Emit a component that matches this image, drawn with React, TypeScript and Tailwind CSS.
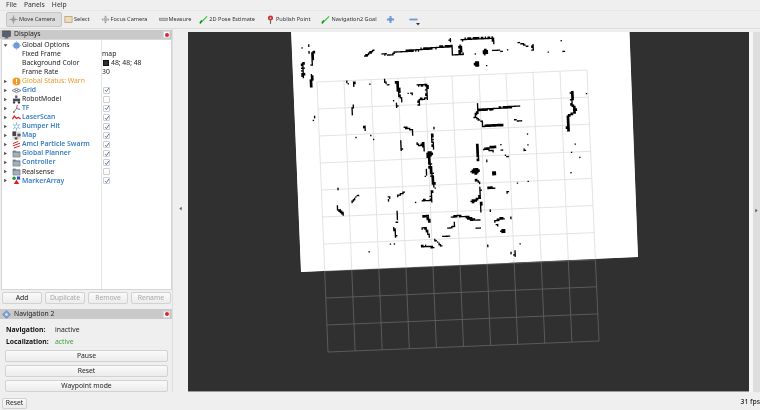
import React from "react";

type Stroke = [number, number[]];
const strokes: Stroke[] = [
  [3, [313, 53, 312, 66]], [3, [303, 65, 303, 78]], [3, [312, 77, 311, 87]], [2.5, [365, 57, 373, 52]],
  [2, [382, 55, 392, 56, 395, 53, 418, 51]], [2.5, [418, 51, 432, 49, 452, 47]], [2, [452, 47, 452, 54]],
  [2.5, [453, 56, 463, 55]], [2, [460, 46, 460, 53]], [2, [462, 40, 493, 39, 494, 45]], [2, [461, 48, 461, 55]],
  [1.6, [493, 51, 503, 52]], [1.6, [517, 43, 527, 47]], [2.5, [533, 46, 533, 51]], [1, [561, 42, 563, 44]],
  [3, [572, 93, 572, 106, 575, 108, 575, 113, 568, 117, 568, 132]],
  [2.2, [520, 107, 508, 108, 492, 110, 478, 111, 475, 118, 482, 123, 483, 127, 503, 126]],
  [1.6, [478, 104, 478, 108]], [1.4, [515, 121, 521, 122]], [2.4, [477, 145, 477, 156]], [3, [485, 150, 495, 148]],
  [1.6, [346, 82, 348, 85]], [2, [354, 83, 354, 87]], [1.6, [384, 81, 388, 86]], [3.5, [397, 83, 399, 93]],
  [2.2, [399, 95, 402, 102]], [2, [397, 105, 397, 108]], [1.6, [408, 95, 412, 95]],
  [2.4, [418, 86, 427, 86, 427, 99, 419, 101, 419, 106]], [1.6, [353, 107, 352, 116]], [1.2, [314, 117, 314, 122]],
  [2, [364, 127, 365, 131]], [2.2, [405, 129, 413, 131, 413, 135]], [1.2, [401, 142, 401, 152]],
  [2.2, [417, 145, 423, 147]], [2, [423, 143, 424, 151]], [2, [432, 135, 433, 151]],
  [3, [428, 155, 434, 187]], [2.2, [432, 192, 431, 200]], [1.8, [422, 201, 432, 202]], [1.6, [426, 171, 426, 177]],
  [2, [358, 196, 352, 203]], [1.6, [389, 197, 389, 202]], [2, [398, 197, 404, 193]],
  [1.6, [337, 207, 338, 210]], [2.6, [339, 211, 343, 215]], [1.6, [397, 213, 397, 223]],
  [2.8, [423, 217, 428, 217, 429, 223]], [2, [394, 229, 396, 238]], [2.2, [422, 229, 426, 229, 429, 237]],
  [1.4, [442, 237, 449, 237]], [2, [422, 247, 433, 248]], [2.2, [435, 241, 442, 247]], [1.8, [447, 229, 455, 227]],
  [1.6, [454, 223, 454, 228]], [2, [452, 218, 458, 217, 468, 218, 475, 221]], [2, [478, 150, 478, 162]],
  [2.4, [485, 150, 493, 152]], [1.6, [505, 156, 508, 158]], [2, [476, 181, 479, 184]], [2, [488, 189, 494, 189]],
  [2.4, [480, 189, 480, 197]], [2.6, [475, 202, 480, 198]], [1.8, [481, 203, 481, 212]], [1.8, [465, 218, 470, 221, 480, 221]],
  [2.4, [495, 222, 503, 219]], [2, [476, 229, 480, 229]], [2, [515, 252, 515, 257]], [1.2, [520, 245, 521, 243]],
];
const dots: number[][] = [
  [302, 49, 1], [309, 47, 1], [309, 53, 1], [450, 41, 1.5], [463, 41, 1.3], [476, 55, 1], [485, 53, 3], [508, 51, 1],
  [549, 53, 0.8], [564, 52, 1], [477, 65, 3], [487, 66, 1], [586, 95, 1], [528, 135, 1], [575, 145, 0.8], [579, 144, 0.6],
  [501, 146, 1], [502, 151, 1], [525, 151, 1], [528, 146, 0.7], [571, 154, 0.8], [370, 85, 0.8], [394, 102, 0.7], [356, 139, 0.7],
  [371, 136, 0.7], [374, 140, 0.7], [411, 146, 1], [434, 129, 0.7], [430, 155, 3], [435, 189, 1], [473, 172, 2.2], [473, 202, 2.2],
  [402, 150, 1], [338, 190, 1], [415, 204, 0.8], [339, 202, 0.6], [391, 245, 0.7], [395, 245, 0.7], [369, 253, 0.7],
  [524, 151, 1], [486, 162, 1], [580, 159, 0.8], [571, 174, 0.8], [476, 172, 3.4], [494, 174, 2.4], [518, 185, 0.8],
  [528, 183, 0.7], [507, 193, 1.2], [490, 212, 1.2], [519, 213, 0.6], [497, 226, 1.2], [511, 219, 1], [503, 232, 2.4],
  [488, 247, 1], [517, 246, 0.7], [511, 254, 0.9], [521, 122, 1],
];

const ANG = (-2.5 * Math.PI) / 180;
const CELL = 1.35;
function buildCells(): string {
  const cos = Math.cos(-ANG), sin = Math.sin(-ANG);
  const cells = new Set<string>();
  const stamp = (x: number, y: number, r: number) => {
    const u = (x * cos - y * sin) / CELL, v = (x * sin + y * cos) / CELL;
    const R = r / CELL;
    const n = Math.ceil(R + 1);
    const cu = Math.round(u), cv = Math.round(v);
    for (let i = cu - n; i <= cu + n; i++) {
      for (let j = cv - n; j <= cv + n; j++) {
        const h = (((i * 73856093) ^ (j * 19349663)) >>> 0) % 100;
        const d = Math.hypot(i - u, j - v);
        if (d <= R + (h / 100) * 0.5 - 0.3) cells.add(i + "," + j);
      }
    }
  };
  strokes.forEach(([w, p]) => {
    for (let k = 0; k + 3 < p.length; k += 2) {
      const len = Math.hypot(p[k + 2] - p[k], p[k + 3] - p[k + 1]);
      const n = Math.max(1, Math.ceil(len / 0.7));
      for (let s = 0; s <= n; s++) {
        stamp(p[k] + ((p[k + 2] - p[k]) * s) / n, p[k + 1] + ((p[k + 3] - p[k + 1]) * s) / n, w / 2);
      }
    }
  });
  dots.forEach(([x, y, r]) => stamp(x, y, Math.max(r, 0.7)));
  let d = "";
  cells.forEach((c) => {
    const [i, j] = c.split(",").map(Number);
    d += `M${(i * CELL - CELL / 2).toFixed(2)} ${(j * CELL - CELL / 2).toFixed(2)}h${CELL}v${CELL}h-${CELL}z`;
  });
  return d;
}
const obstacles = buildCells();

const lerp = (a: number[], b: number[], t: number) => [a[0] + (b[0] - a[0]) * t, a[1] + (b[1] - a[1]) * t];
const TL = [317, 83], TR = [587, 71], BL = [328, 353], BR = [599, 342];
const gridLines: number[][] = [];
for (let i = 0; i <= 10; i++) {
  const t = i / 10;
  const a = lerp(TL, TR, t), b = lerp(BL, BR, t);
  gridLines.push([a[0], a[1], b[0], b[1]]);
  const c = lerp(TL, BL, t), d = lerp(TR, BR, t);
  gridLines.push([c[0], c[1], d[0], d[1]]);
}
const MAP = "290.6,20 629,20 638,258 301,273";

function Viewport() {
  return (
    <svg viewBox="188 33 561 359" className="block w-full h-full">
      <defs>
        <clipPath id="mapclip"><polygon points={MAP} /></clipPath>
      </defs>
      <rect x="188" y="33" width="561" height="359" fill="#303030" />
      <polygon points={MAP} fill="#fff" />
      {gridLines.map((l, i) => (
        <line key={i} x1={l[0]} y1={l[1]} x2={l[2]} y2={l[3]} stroke="#606060" strokeWidth="0.9" />
      ))}
      <g clipPath="url(#mapclip)">
        <polygon points={MAP} fill="#fff" />
        {gridLines.map((l, i) => (
          <line key={i} x1={l[0]} y1={l[1]} x2={l[2]} y2={l[3]} stroke="#e0e0e0" strokeWidth="0.9" />
        ))}
      </g>
      <path d={obstacles} fill="#000" transform="rotate(-2.5)" />
    </svg>
  );
}

const Check = ({ on }: { on: boolean }) => (
  <span className="w-[7px] h-[7px] ml-[1px] flex items-center justify-center border border-[#cfcfcf] bg-white rounded-[1px]">
    {on && (
      <svg viewBox="0 0 7 7" className="w-[6px] h-[6px] shrink-0">
        <path d="M1.2 3.6 L2.8 5.4 L5.8 1" fill="none" stroke="#3465a4" strokeWidth="1" />
      </svg>
    )}
  </span>
);

const Folder = () => (
  <svg viewBox="0 0 10 9" className="w-[9px] h-[8px]">
    <path d="M1 1h3l1 1h4v6H1z" fill="#7c8796" stroke="#5b6470" strokeWidth="0.6" />
    <rect x="1.5" y="3" width="7" height="4.6" fill="#a5afbc" />
  </svg>
);

const IconFor = ({ k }: { k: string }) => {
  const c = "w-[9px] h-[9px] shrink-0";
  switch (k) {
    case "global":
      return <svg viewBox="0 0 10 10" className={c}><circle cx="5" cy="5" r="3.6" fill="#6f9bd8" /><path d="M5 0v2M5 8v2M0 5h2M8 5h2" stroke="#9bb9e2" strokeWidth="1" /></svg>;
    case "warn":
      return <svg viewBox="0 0 10 10" className={c}><circle cx="5" cy="5" r="4.4" fill="#ee9a25" /><rect x="4.4" y="2" width="1.2" height="3.8" fill="#fff" /><rect x="4.4" y="6.6" width="1.2" height="1.2" fill="#fff" /></svg>;
    case "grid":
      return <svg viewBox="0 0 10 10" className={c}><path d="M0 5 L5 2.6 L10 5 L5 7.4 Z M2.5 3.8 L7.5 6.2 M7.5 3.8 L2.5 6.2" fill="none" stroke="#6f7780" strokeWidth="0.9" /></svg>;
    case "robot":
      return <svg viewBox="0 0 10 10" className={c}><rect x="3.5" y="0.5" width="2.5" height="3" fill="#59616b" /><rect x="1" y="4" width="8" height="3" fill="#444b55" /><circle cx="2.3" cy="8.2" r="1.3" fill="#333" /><circle cx="7.7" cy="8.2" r="1.3" fill="#333" /></svg>;
    case "tf":
      return <svg viewBox="0 0 10 10" className={c}><path d="M2 9 L5 5" stroke="#2c8f3a" strokeWidth="1" /><path d="M5 5 L6 1" stroke="#d33" strokeWidth="1" /><path d="M5 5 L9 6" stroke="#3465c4" strokeWidth="1" /><circle cx="2" cy="9" r="1" fill="#d33" /></svg>;
    case "laser":
      return <svg viewBox="0 0 10 10" className={c}><path d="M0.5 7 L2.5 3.5 L5 6 L7 5 L9.5 6.5" fill="none" stroke="#d22" strokeWidth="1.4" /></svg>;
    case "bumper":
      return <svg viewBox="0 0 10 10" className={c}><path d="M5 0.5V9.5M1 2.5L9 7.5M9 2.5L1 7.5" stroke="#7fb0e0" strokeWidth="1" /><circle cx="5" cy="5" r="2" fill="#fff" stroke="#7fb0e0" strokeWidth="0.8" /></svg>;
    case "map":
      return <svg viewBox="0 0 10 10" className={c}><rect x="0.5" y="0.5" width="9" height="9" fill="#ddd" /><rect x="0.5" y="0.5" width="4" height="5" fill="#444" /><rect x="6" y="3" width="3.5" height="3" fill="#555" /><rect x="3" y="7" width="3" height="2.5" fill="#555" /></svg>;
    case "amcl":
      return <svg viewBox="0 0 10 10" className={c}><path d="M1 4 L7 1.5 M1 6.5 L9 3.5 M2 9 L9 6.5" stroke="#d22" strokeWidth="1.1" /></svg>;
    case "marker":
      return <svg viewBox="0 0 10 10" className={c}><circle cx="2.3" cy="2.5" r="2" fill="#2a9a3a" /><rect x="5.5" y="0.5" width="3.5" height="3.5" fill="#2b55c4" /><path d="M5 4 L8 9 H2 Z" fill="#d22" /></svg>;
    default:
      return <Folder />;
  }
};

const Caret = () => (
  <svg viewBox="0 0 5 5" className="w-[5px] h-[5px] shrink-0"><path d="M1.2 0.8 L3.8 2.5 L1.2 4.2 Z" fill="#444" /></svg>
);
const CaretDown = () => (
  <svg viewBox="0 0 5 5" className="w-[5px] h-[5px] shrink-0"><path d="M0.6 1.2 L4.4 1.2 L2.5 3.8 Z" fill="#444" /></svg>
);

const BLUE = "text-[#3a7fc6] font-semibold";
const rows: { k: string; t: string; c: string; on?: boolean }[] = [
  { k: "warn", t: "Global Status: Warn", c: "text-[#e59a2c]" },
  { k: "grid", t: "Grid", c: BLUE, on: true },
  { k: "robot", t: "RobotModel", c: "text-[#222]", on: false },
  { k: "tf", t: "TF", c: BLUE, on: true },
  { k: "laser", t: "LaserScan", c: BLUE, on: true },
  { k: "bumper", t: "Bumper Hit", c: BLUE, on: true },
  { k: "map", t: "Map", c: BLUE, on: true },
  { k: "amcl", t: "Amcl Particle Swarm", c: BLUE, on: true },
  { k: "folder", t: "Global Planner", c: BLUE, on: true },
  { k: "folder", t: "Controller", c: BLUE, on: true },
  { k: "folder", t: "Realsense", c: "text-[#222]", on: false },
  { k: "marker", t: "MarkerArray", c: BLUE, on: true },
];

const Row = ({ left, right, leftClass = "" }: { left: React.ReactNode; right?: React.ReactNode; leftClass?: string }) => (
  <div className="flex h-[9.07px] items-center">
    <div className={`w-[99px] flex items-center whitespace-nowrap shrink-0 ${leftClass}`}>{left}</div>
    <div className="flex items-center whitespace-nowrap">{right}</div>
  </div>
);

const Close = () => (
  <span className="w-[7px] h-[7px] bg-white flex items-center justify-center border border-[#ddd]">
    <span className="w-[4px] h-[4px] rounded-full bg-[#d8262c]" />
  </span>
);

const PanelTitle = ({ icon, title }: { icon: React.ReactNode; title: string }) => (
  <div className="h-[10px] bg-[#c9c9c9] flex items-center pl-[2px] pr-[2px] gap-[3px] text-[#222]">
    {icon}
    <span className="flex-1">{title}</span>
    <Close />
  </div>
);

const TB = ({ icon, label, active, className = "" }: { icon: React.ReactNode; label: string; active?: boolean; className?: string }) => (
  <div className={`h-[15px] flex items-center gap-[1px] whitespace-nowrap ${active ? "w-[56px] pl-[2px] -mr-[9px] bg-[#dcdcdc] border border-[#c4c4c4] rounded-[2px]" : ""} ${className}`}>
    {icon}
    <span>{label}</span>
  </div>
);

const Btn = ({ children, disabled, className = "" }: { children: React.ReactNode; disabled?: boolean; className?: string }) => (
  <div className={`flex items-center justify-center border border-[#d2d2d2] rounded-[2px] bg-gradient-to-b from-[#fafafa] to-[#ececec] ${disabled ? "text-[#a8a8a8]" : "text-[#222]"} ${className}`}>
    {children}
  </div>
);

const ic = "w-[9px] h-[9px] shrink-0";
const Arrow2 = () => (
  <svg viewBox="0 0 10 10" className={ic}><path d="M1 9.5 L9 1.5" stroke="#2fc02f" strokeWidth="1.3" /><path d="M1 9 L3 6" stroke="#127a12" strokeWidth="1.3" /></svg>
);

export default function App() {
  return (
    <div className="w-[760px] h-[410px] overflow-hidden bg-[#efefef] text-[6.8px] leading-none text-[#222] flex flex-col blur-[0.25px]" style={{ fontFamily: '"Noto Sans", sans-serif' }}>
      {/* menu */}
      <div className="h-[10px] flex items-center gap-[7px] pl-[6px] shrink-0 text-[#333]">
        <span>File</span><span>Panels</span><span>Help</span>
      </div>
      {/* toolbar */}
      <div className="h-[19px] shrink-0 flex items-center pl-[6px] border-t border-[#e6e6e6] border-b border-b-[#dcdcdc] text-[#333] text-[5.6px]">
        <div className="flex items-center gap-[11px]">
          <TB active label="Move Camera" icon={<svg viewBox="0 0 10 10" className={ic}><circle cx="5" cy="5" r="2.6" fill="#aaa" /><path d="M5 0.5V9.5M0.5 5H9.5" stroke="#999" strokeWidth="1" /></svg>} />
          <TB label="Select" icon={<svg viewBox="0 0 10 10" className={ic}><rect x="1" y="1.5" width="8" height="7" fill="#eedcb8" stroke="#a98f63" strokeWidth="0.7" /></svg>} />
          <TB label="Focus Camera" icon={<svg viewBox="0 0 10 10" className={ic}><circle cx="5" cy="5" r="2.4" fill="#b5b5b5" /><path d="M5 0.5 L6.5 2.4H3.5ZM5 9.5 L6.5 7.6H3.5ZM0.5 5 L2.4 3.5V6.5ZM9.5 5 L7.6 3.5V6.5Z" fill="#999" /></svg>} />
          <TB label="Measure" className="-mr-[3px]" icon={<svg viewBox="0 0 10 10" className={ic}><rect x="0.5" y="3.5" width="9" height="2.6" fill="#bbb" stroke="#777" strokeWidth="0.6" /></svg>} />
          <TB label="2D Pose Estimate" icon={<Arrow2 />} />
          <TB label="Publish Point" icon={<svg viewBox="0 0 10 10" className={ic}><circle cx="5" cy="3.4" r="2.8" fill="#c8302c" /><circle cx="5" cy="3.4" r="1" fill="#f3c0b8" /><path d="M5 6V9.8" stroke="#555" strokeWidth="1.2" /></svg>} />
          <TB label="Navigation2 Goal" className="-mr-[2px]" icon={<Arrow2 />} />
          <svg viewBox="0 0 10 10" className={ic}><path d="M5 1V9M1 5H9" stroke="#6d9ad6" strokeWidth="2.2" /><circle cx="5" cy="5" r="2" fill="#6d9ad6" /></svg>
          <div className="w-[12px] h-[12px] ml-[3px] relative flex items-center">
            <svg viewBox="0 0 10 10" className={ic}><path d="M0.5 5H9.5" stroke="#6d9ad6" strokeWidth="2" /></svg>
            <svg viewBox="0 0 4 3" className="absolute right-[1px] bottom-0 w-[4px] h-[3px]"><path d="M0 0H4L2 2.5Z" fill="#333" /></svg>
          </div>
        </div>
      </div>
      {/* main */}
      <div className="flex flex-1 min-h-0">
        <div className="w-[172px] shrink-0 flex flex-col pt-[1px]">
          <PanelTitle title="Displays" icon={<svg viewBox="0 0 10 10" className="w-[9px] h-[9px]"><rect x="0.5" y="1" width="9" height="6.4" fill="#566070" stroke="#444" strokeWidth="0.6" /><rect x="3" y="8" width="4" height="1.4" fill="#555" /></svg>} />
          <div className="ml-[1px] h-[251px] bg-white border border-[#d6d6d6] flex relative shrink-0">
            <div className="absolute left-[99px] top-0 bottom-0 w-px bg-[#e6e6e6]" />
            <div className="flex-1 pt-[0.5px] pl-[1px]">
              <Row left={<><CaretDown /><span className="ml-[4px] flex"><IconFor k="global" /></span><span className="ml-[1px]">Global Options</span></>} />
              <Row leftClass="pl-[19px]" left="Fixed Frame" right="map" />
              <Row leftClass="pl-[19px]" left="Background Color" right={<span className="flex items-center gap-[2px] ml-[1px]"><span className="w-[6px] h-[6px] bg-[#303030] border border-[#111]" />48; 48; 48</span>} />
              <Row leftClass="pl-[19px]" left="Frame Rate" right="30" />
              {rows.map((r) => (
                <Row key={r.t} left={<><Caret /><span className="ml-[4px] flex"><IconFor k={r.k} /></span><span className={`ml-[1px] ${r.c}`}>{r.t}</span></>} right={r.on === undefined ? undefined : <Check on={r.on} />} />
              ))}
            </div>
          </div>
          <div className="h-[12px] mt-[2px] pl-[2px] pr-[1px] flex gap-[3px] shrink-0">
            <Btn className="flex-1">Add</Btn>
            <Btn disabled className="flex-1">Duplicate</Btn>
            <Btn disabled className="flex-1">Remove</Btn>
            <Btn disabled className="flex-1">Rename</Btn>
          </div>
          <div className="mt-[5px] shrink-0">
            <PanelTitle title="Navigation 2" icon={<svg viewBox="0 0 10 10" className="w-[9px] h-[9px]"><path d="M5 0.5L9.5 5L5 9.5L0.5 5Z" fill="#7fa3cf" stroke="#5b7da8" strokeWidth="0.6" /><circle cx="5" cy="5" r="1.4" fill="#dfe9f5" /></svg>} />
          </div>
          <div className="pl-[6px] pr-[4px] pt-[6px] flex flex-col shrink-0">
            <div className="flex h-[10px] items-center"><span className="w-[49px] font-bold text-[#111]">Navigation:</span><span>inactive</span></div>
            <div className="flex h-[10px] mt-[2px] items-center"><span className="w-[49px] font-bold text-[#111] whitespace-nowrap">Localization:</span><span className="text-[#3f9e3f]">active</span></div>
            <div className="flex flex-col gap-[3px] mt-[3px] -ml-[1px]">
              <Btn className="h-[12px]">Pause</Btn>
              <Btn className="h-[12px]">Reset</Btn>
              <Btn className="h-[12px]">Waypoint mode</Btn>
            </div>
          </div>
        </div>
        <div className="w-[16px] shrink-0 flex items-center justify-center pb-[4px] border-l border-[#dedede]">
          <svg viewBox="0 0 4 6" className="w-[3px] h-[5px]"><path d="M3.5 0.5V5.5L0.5 3Z" fill="#555" /></svg>
        </div>
        <div className="flex-1 min-w-0 pt-[3px] flex flex-col">
          <div className="h-[360px] border-b border-[#9a9a9a] overflow-hidden"><Viewport /></div>
        </div>
        <div className="w-[11px] shrink-0 flex pt-[3px]">
          <div className="w-[4px] bg-[#f6f6f6]" />
          <div className="w-[7px] bg-[#dedede] flex items-center justify-center pb-[4px]">
            <svg viewBox="0 0 4 6" className="w-[3px] h-[5px]"><path d="M0.5 0.5V5.5L3.5 3Z" fill="#555" /></svg>
          </div>
        </div>
      </div>
      {/* status */}
      <div className="h-[18px] shrink-0 flex items-end justify-between pl-[2px] pb-[1px]">
        <Btn className="w-[25px] h-[11px]">Reset</Btn>
        <span className="mb-[3px] whitespace-nowrap font-medium">31 fps</span>
      </div>
    </div>
  );
}
